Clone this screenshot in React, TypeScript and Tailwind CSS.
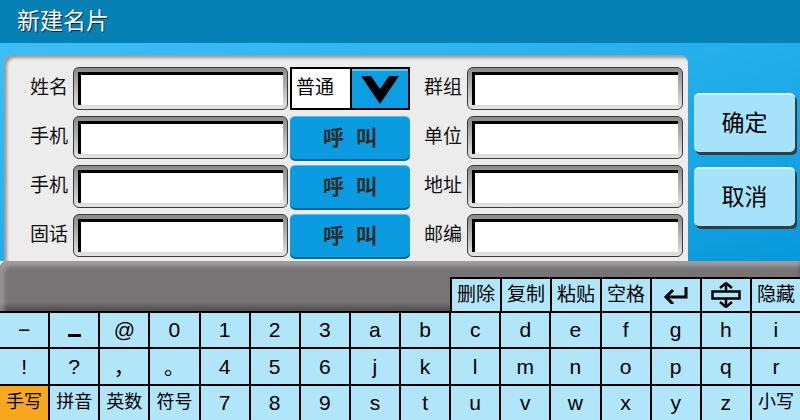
import React from "react";

const row1 = ["−", "_", "@", "0", "1", "2", "3", "a", "b", "c", "d", "e", "f", "g", "h", "i"];
const row2 = ["!", "?", "，", "。", "4", "5", "6", "j", "k", "l", "m", "n", "o", "p", "q", "r"];
const row3 = ["手写", "拼音", "英数", "符号", "7", "8", "9", "s", "t", "u", "v", "w", "x", "y", "z", "小写"];

function Field() {
  return (
    <div className="h-[43px] rounded-[6px] border border-[#3a3a3a] bg-linear-to-b from-[#8a8a8a] to-[#e4e4e4] p-[4px]">
      <div className="h-full w-full border-l-[3px] border-t-[3px] border-black bg-white" />
    </div>
  );
}

function CallButton() {
  return (
    <div className="flex h-[43px] w-[120px] items-center justify-center rounded-[5px] border-t border-[#4cc2f2] bg-[#0a9be0] pl-[12px] text-[21px] font-bold tracking-[12px] text-[#2d2d2d] shadow-[0_2px_0_#06679a]">
      呼叫
    </div>
  );
}

function Select() {
  return (
    <div className="flex h-[43px] w-[120px] border-2 border-black bg-black">
      <div className="flex w-[58px] items-center bg-white pl-[4px] text-[19px] text-black">普通</div>
      <div className="ml-[2px] flex flex-1 items-center justify-center border-t-2 border-[#5cc8f4] bg-[#0b9ee2]">
        <svg width="38" height="30" viewBox="0 0 38 30">
          <polygon points="0,1 10,1 19,14 28,1 38,1 19,29" fill="#000" />
        </svg>
      </div>
    </div>
  );
}

function FormRow({ left, right, middle }: { left: string; right: string; middle: React.ReactNode }) {
  return (
    <div className="flex h-[43px] items-center">
      <span className="w-[45px] pr-[5px] text-right text-[19px] text-[#111]">{left}</span>
      <div className="w-[215px]">
        <Field />
      </div>
      <div className="ml-[2px]">{middle}</div>
      <span className="w-[57px] pr-[5px] text-right text-[19px] text-[#111]">{right}</span>
      <div className="w-[216px]">
        <Field />
      </div>
    </div>
  );
}

function EnterIcon() {
  return (
    <svg width="26" height="18" viewBox="0 0 26 18" fill="none" stroke="#000" strokeWidth="3">
      <path d="M23 1 V11 H4" />
      <path d="M10 4 L3 11 L10 18" />
    </svg>
  );
}

function UpDownIcon() {
  return (
    <svg width="30" height="26" viewBox="0 0 30 26" fill="none" stroke="#000" strokeWidth="2.5">
      <path d="M9 6 L15 1 L21 6" />
      <path d="M15 1 V9" />
      <rect x="1.5" y="9.5" width="27" height="7" />
      <path d="M15 17 V25" />
      <path d="M9 20 L15 25 L21 20" />
    </svg>
  );
}

function Key({ label }: { label: string }) {
  const cjk = label.length > 1;
  const orange = label === "手写";
  return (
    <div
      className={
        "flex items-center justify-center " +
        (orange ? "bg-[#f8a81c] " : "bg-[#b1e5f9] ") +
        (cjk ? "text-[18px]" : "text-[21px]")
      }
    >
      {label === "_" ? <span className="mt-[10px] h-[3px] w-[13px] bg-black" /> : label}
    </div>
  );
}

export default function App() {
  return (
    <div className="flex h-[420px] w-[800px] flex-col overflow-hidden font-['Liberation_Sans','Noto_Sans_CJK_SC',sans-serif] text-black">
      <div className="flex h-[43px] items-center bg-[#0580b5] pl-[17px] text-[23px] text-white [text-shadow:1px_1px_0_#0a2a3a]">
        新建名片
      </div>

      <div className="flex h-[218px] bg-linear-to-br from-[#3fbef4] via-[#22aeea] to-[#0799dc]">
        <div className="ml-[4px] mt-[12px] flex w-[684px] flex-col gap-[6px] rounded-t-[8px] bg-[#ececec] pl-[24px] pt-[12px] shadow-[inset_3px_3px_3px_rgba(0,0,0,0.35)]">
          <FormRow left="姓名" right="群组" middle={<Select />} />
          <FormRow left="手机" right="单位" middle={<CallButton />} />
          <FormRow left="手机" right="地址" middle={<CallButton />} />
          <FormRow left="固话" right="邮编" middle={<CallButton />} />
        </div>
        <div className="ml-[6px] flex w-[101px] flex-col gap-[15px] pt-[50px]">
          <div className="flex h-[59px] items-center justify-center rounded-[5px] border-t-2 border-[#d4f3ff] bg-[#a6e3fb] text-[23px] shadow-[2px_3px_0_#3a3a3a]">
            确定
          </div>
          <div className="flex h-[59px] items-center justify-center rounded-[5px] border-t-2 border-[#d4f3ff] bg-[#a6e3fb] text-[23px] shadow-[2px_3px_0_#3a3a3a]">
            取消
          </div>
        </div>
      </div>

      <div className="flex h-[50px] items-end justify-end rounded-tl-[6px] bg-[#767474] shadow-[inset_4px_5px_4px_rgba(255,255,255,0.3),inset_0_-5px_5px_rgba(0,0,0,0.3)]">
        <div className="flex h-[34px] w-[350px] gap-[2px] bg-black pl-[2px] pt-[2px]">
          {["删除", "复制", "粘贴", "空格"].map((t) => (
            <div key={t} className="flex w-[48px] items-center justify-center bg-[#b1e5f9] text-[19px]">
              {t}
            </div>
          ))}
          <div className="flex w-[48px] items-center justify-center bg-[#b1e5f9]">
            <EnterIcon />
          </div>
          <div className="flex w-[48px] items-center justify-center bg-[#b1e5f9]">
            <UpDownIcon />
          </div>
          <div className="flex w-[48px] items-center justify-center bg-[#b1e5f9] text-[19px]">隐藏</div>
        </div>
      </div>

      <div className="grid h-[109px] grid-cols-16 grid-rows-3 gap-[2px] bg-black pt-[2px]">
        {[...row1, ...row2, ...row3].map((k, i) => (
          <Key key={i} label={k} />
        ))}
      </div>
    </div>
  );
}
